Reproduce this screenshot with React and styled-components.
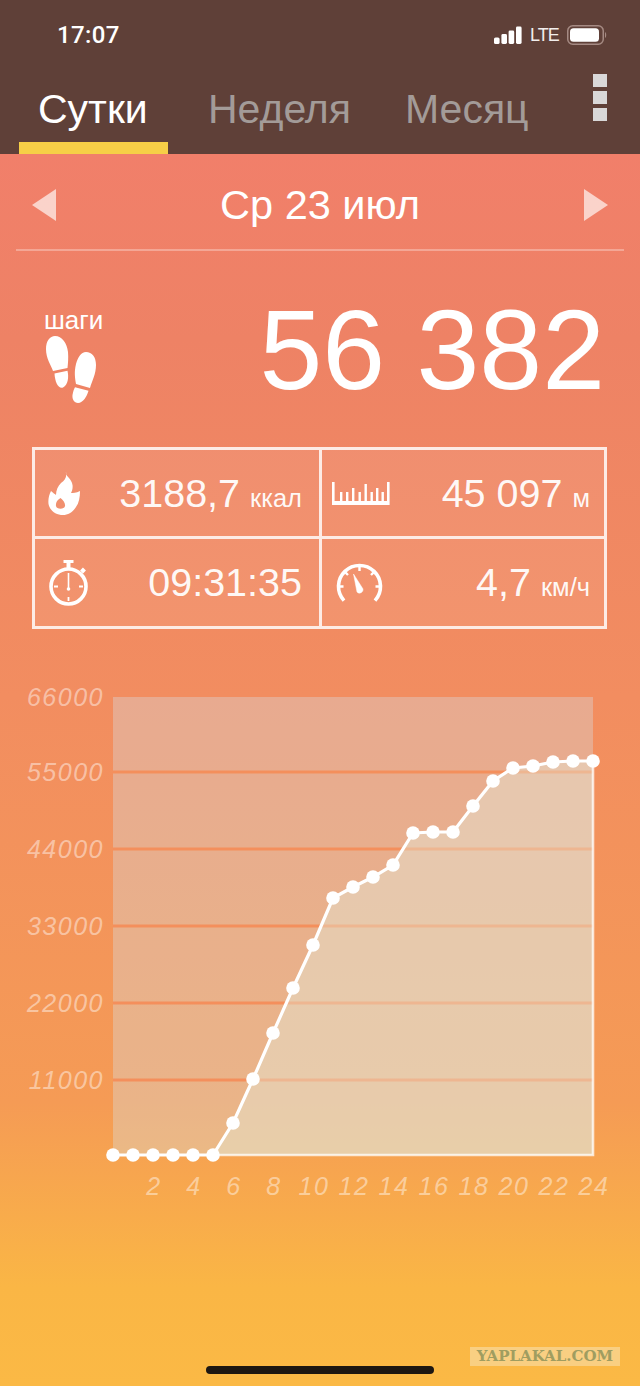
import styled, { createGlobalStyle } from "styled-components";

const GlobalStyle = createGlobalStyle`
  html, body {
    margin: 0;
    padding: 0;
    background: #fbb945;
  }
  * {
    box-sizing: border-box;
  }
`;

const Y_LABELS = [
  { text: "66000", y: 697 },
  { text: "55000", y: 772 },
  { text: "44000", y: 849 },
  { text: "33000", y: 926 },
  { text: "22000", y: 1003 },
  { text: "11000", y: 1080 },
];

const GRID_LINES = [772, 849, 926, 1003, 1080];

const POINT_Y = [
  1155, 1155, 1155, 1155, 1155, 1155, 1123, 1079, 1033, 988, 945, 898, 887, 877,
  865, 833, 832, 832, 806, 781, 768, 766, 762, 761, 761,
];

const pointX = (i) => 113 + i * 20;

function App() {
  const line = POINT_Y.map((y, i) => `${pointX(i)},${y}`).join(" ");
  const hours = [];
  for (let h = 2; h <= 24; h += 2) hours.push(h);

  return (
    <Screen>
      <GlobalStyle />
      <Header>
        <StatusBar>
          <Clock>17:07</Clock>
          <StatusIcons>
            <svg width="28" height="18" viewBox="0 0 28 18" fill="#fff">
              <rect x="0" y="11.5" width="5.6" height="6.5" rx="1.6" />
              <rect x="7.4" y="8" width="5.6" height="10" rx="1.4" />
              <rect x="14.6" y="4.5" width="5.6" height="13.5" rx="1.4" />
              <rect x="22" y="0.5" width="5.6" height="17.5" rx="1.4" />
            </svg>
            <Network>LTE</Network>
            <svg width="40" height="20" viewBox="0 0 40 20">
              <rect x="0.75" y="0.75" width="35.5" height="18.5" rx="5" fill="none" stroke="#a58a83" strokeWidth="1.5" />
              <rect x="3" y="3.2" width="29" height="13.6" rx="3.5" fill="#fff" />
              <path d="M38 7 C39.6 7.6 39.6 12.4 38 13 Z" fill="#a58a83" />
            </svg>
          </StatusIcons>
        </StatusBar>
        <Tabs>
          <Tab $active $width={149}>Сутки</Tab>
          <Tab $width={197}>Неделя</Tab>
          <Tab $width={180}>Месяц</Tab>
          <Menu>
            <MenuDot />
            <MenuDot />
            <MenuDot />
          </Menu>
        </Tabs>
      </Header>

      <Content>
        <DateRow>
          <Arrow $dir="left" />
          <DateText>Ср 23 июл</DateText>
          <Arrow $dir="right" />
        </DateRow>

        <StepsRow>
          <StepsLabel>
            <span>шаги</span>
            <svg width="50" height="70" viewBox="0 0 50 70" fill="#fff">
              <path d="M9 1 C16 1 21 8 22 17 C22.5 23 22 28 21.5 33 L7 36 C5 30 0 24 0 14 C0 6 4 1 9 1 Z" />
              <path d="M8.5 38.5 L21.5 35.7 C23 42 22 50 17 52.5 C12 54 9 47 8.5 38.5 Z" />
              <path d="M40 17 C46 17 50 22 50 30 C50 39 46 46 44 53 L30 49 C29 43 28 37 30 29 C32 22 35 17 40 17 Z" />
              <path d="M29 52.3 L42.5 55.7 C41 61 37 68 32 68 C28 68 26 64 26.5 60 C27 57 28 54 29 52.3 Z" />
            </svg>
          </StepsLabel>
          <StepsValue>56 382</StepsValue>
        </StepsRow>

        <StatsGrid>
          <StatCell>
            <svg width="34" height="44" viewBox="0 0 34 44" fill="#fff">
              <path
                fillRule="evenodd"
                d="M18 1 C17 5 24 8 24.5 14 C25 17 24 20 23 22 C25 22 28 22 32 20 C32 26 31 32 28 36 C25 41 20 44 15 44 C8 44 2 40 0.5 33 C0 28 1 24 3 20 C5 22 7 23 8 24 C8 19 10 15 13 12 C17 9 19 6 18 1 Z M12.5 27 C9 29 7.5 32 8 35 C8.5 38.5 16.5 38.5 17 35 C17.5 32 15 29 12.5 27 Z"
              />
            </svg>
            <StatValue>
              3188,7<Unit>ккал</Unit>
            </StatValue>
          </StatCell>
          <StatCell $right>
            <svg width="58" height="24" viewBox="0 0 58 24" fill="#fff">
              <path d="M0 1 H2.6 V20 H55 V1 H57.6 V24 H0 Z" />
              <rect x="8" y="11" width="2.4" height="10" />
              <rect x="14" y="11" width="2.4" height="10" />
              <rect x="20" y="7" width="2.4" height="14" />
              <rect x="26.5" y="11" width="2.4" height="10" />
              <rect x="32.5" y="3" width="2.4" height="18" />
              <rect x="38.5" y="11" width="2.4" height="10" />
              <rect x="44" y="7" width="2.4" height="14" />
              <rect x="49.5" y="11" width="2.4" height="10" />
            </svg>
            <StatValue>
              45 097<Unit>м</Unit>
            </StatValue>
          </StatCell>
          <StatCell>
            <svg width="41" height="46" viewBox="-1 0 41 46" fill="none" stroke="#fff">
              <circle cx="19.5" cy="26.5" r="17.5" strokeWidth="3.6" />
              <path d="M14.5 1.5 H24.5" strokeWidth="3" />
              <path d="M19.5 1.5 V9" strokeWidth="4" />
              <path d="M32.5 9 L35.5 12" strokeWidth="4" />
              <path d="M19.5 13 V29" strokeWidth="1.6" />
              <circle cx="19.5" cy="29" r="1.8" fill="#fff" stroke="none" />
              <path d="M19.5 37 V41 M5 26.5 H9 M30 26.5 H34" strokeWidth="1.8" />
            </svg>
            <StatValue>09:31:35</StatValue>
          </StatCell>
          <StatCell $right>
            <svg width="53" height="40" viewBox="-3 0 53 40" fill="none" stroke="#fff">
              <path d="M9 37.6 A21 21 0 1 1 40 37.6" strokeWidth="3.6" />
              <path d="M24.5 3 V8 M9.6 8.6 L13 12 M39.4 8.6 L36 12 M3.5 23.5 H8.5 M45.5 23.5 H40.5" strokeWidth="2.4" />
              <path d="M18.5 11 L22 29 A3.5 3.5 0 0 0 28 26 Z" fill="#fff" strokeWidth="0.5" />
            </svg>
            <StatValue>
              4,7<Unit>км/ч</Unit>
            </StatValue>
          </StatCell>
        </StatsGrid>

        <Chart viewBox="0 680 640 530">
          <rect x="113" y="697" width="480" height="458" fill="#d2f0ff" fillOpacity="0.3" />
          {GRID_LINES.map((y) => (
            <line key={y} x1="113" x2="593" y1={y} y2={y} stroke="#f48f5c" strokeWidth="3" />
          ))}
          <polygon points={`${line} 593,1155`} fill="#e4ebdc" fillOpacity="0.42" />
          <polyline points="593,761 593,1155 213,1155" fill="none" stroke="#fff" strokeOpacity="0.75" strokeWidth="2.6" />
          <polyline points={line} fill="none" stroke="#fff" strokeWidth="3.2" />
          {POINT_Y.map((y, i) => (
            <circle key={i} cx={pointX(i)} cy={y} r="6.8" fill="#fff" />
          ))}
          {Y_LABELS.map((l) => (
            <AxisText key={l.text} x="104" y={l.y + 8.5} textAnchor="end">
              {l.text}
            </AxisText>
          ))}
          {hours.map((h) => (
            <AxisText key={h} x={pointX(h) + 1} y="1195" textAnchor="middle">
              {h}
            </AxisText>
          ))}
        </Chart>
      </Content>

      <Watermark>YAPLAKAL.COM</Watermark>
      <HomeBar />
    </Screen>
  );
}

const Screen = styled.div`
  position: relative;
  width: 640px;
  height: 1386px;
  overflow: hidden;
  display: flex;
  flex-direction: column;
  font-family: "Liberation Sans", Arial, sans-serif;
  color: #fff;
`;

const Header = styled.header`
  height: 154px;
  flex: none;
  background: #5f4038;
  display: flex;
  flex-direction: column;
`;

const StatusBar = styled.div`
  height: 70px;
  padding: 0 33px 0 57px;
  display: flex;
  align-items: center;
  justify-content: space-between;
`;

const Clock = styled.span`
  font-family: Roboto, "Liberation Sans", sans-serif;
  font-size: 24px;
  font-weight: 500;
  letter-spacing: 0.4px;
  color: #fff;
`;

const StatusIcons = styled.div`
  display: flex;
  align-items: center;
  gap: 8px;
`;

const Network = styled.span`
  font-size: 18px;
  width: 29px;
  letter-spacing: -0.9px;
  color: #f2eeec;
`;

const Tabs = styled.nav`
  flex: 1;
  display: flex;
  padding-left: 19px;
  align-items: stretch;
`;

const Tab = styled.div`
  width: ${(props) => props.$width}px;
  display: flex;
  align-items: flex-start;
  padding: 15px 0 0 ${(props) => (props.$active ? 19 : 40)}px;
  font-size: 41px;
  line-height: 48px;
  white-space: nowrap;
  color: ${(props) => (props.$active ? "#fff" : "#a39b98")};
  border-bottom: 12px solid ${(props) => (props.$active ? "#f6cf47" : "transparent")};
`;

const Menu = styled.div`
  margin-left: 48px;
  padding-top: 4px;
  display: flex;
  flex-direction: column;
  gap: 4px;
`;

const MenuDot = styled.span`
  width: 14px;
  height: 13px;
  background: #d9d8d8;
`;

const Content = styled.main`
  flex: 1;
  display: flex;
  flex-direction: column;
  background: linear-gradient(
    180deg,
    #f17f6a 0%,
    #ee8265 15%,
    #f28d60 44%,
    #f59b55 77%,
    #fab645 92%,
    #fbb945 100%
  );
`;

const DateRow = styled.div`
  height: 97px;
  flex: none;
  margin: 0 16px;
  padding: 6px 16px 0;
  display: flex;
  align-items: center;
  justify-content: space-between;
  border-bottom: 2px solid rgba(255, 255, 255, 0.3);
`;

const Arrow = styled.span`
  width: 0;
  height: 0;
  border-top: 16px solid transparent;
  border-bottom: 16px solid transparent;
  ${(props) =>
    props.$dir === "left"
      ? "border-right: 24px solid rgba(255, 255, 255, 0.65);"
      : "border-left: 24px solid rgba(255, 255, 255, 0.65);"}
`;

const DateText = styled.span`
  font-size: 41.5px;
  color: #fff;
`;

const StepsRow = styled.section`
  height: 196px;
  flex: none;
  padding: 55px 35px 0 44px;
  display: flex;
  justify-content: space-between;
  align-items: flex-start;
`;

const StepsLabel = styled.div`
  display: flex;
  flex-direction: column;
  font-size: 26px;
  line-height: 29px;
  svg {
    margin-left: 2px;
    display: block;
  }
`;

const StepsValue = styled.div`
  font-size: 113px;
  line-height: 112px;
  margin-top: -12px;
  white-space: nowrap;
`;

const StatsGrid = styled.section`
  width: 575px;
  height: 182px;
  margin-left: 32px;
  flex: none;
  display: grid;
  grid-template-columns: 284px 285px;
  grid-template-rows: 89px 87px;
  border: 3px solid rgba(255, 255, 255, 0.82);
  background: rgba(255, 255, 255, 0.08);
`;

const StatCell = styled.div`
  display: flex;
  align-items: center;
  justify-content: space-between;
  padding: 0 ${(props) => (props.$right ? 14 : 17)}px 0 ${(props) => (props.$right ? 10 : 13)}px;
  border-left: ${(props) => (props.$right ? "3px solid rgba(255, 255, 255, 0.82)" : "none")};
  &:nth-child(-n + 2) {
    border-bottom: 3px solid rgba(255, 255, 255, 0.82);
  }
`;

const StatValue = styled.div`
  font-size: 39.5px;
  white-space: nowrap;
  color: rgba(255, 255, 255, 0.95);
`;

const Unit = styled.span`
  font-size: 25.5px;
  margin-left: 10px;
`;

const Chart = styled.svg`
  width: 640px;
  height: 530px;
  margin-top: 51px;
  display: block;
  flex: none;
`;

const AxisText = styled.text`
  font-size: 25px;
  letter-spacing: 1.5px;
  font-style: italic;
  fill: rgba(255, 255, 255, 0.45);
`;

const Watermark = styled.div`
  position: absolute;
  left: 470px;
  top: 1347px;
  width: 150px;
  height: 19px;
  background: #f9cf82;
  color: #a09d60;
  font-family: "DejaVu Serif", serif;
  font-weight: 700;
  font-size: 15px;
  line-height: 19px;
  text-align: center;
  white-space: nowrap;
`;

const HomeBar = styled.div`
  position: absolute;
  left: 206px;
  top: 1366px;
  width: 228px;
  height: 8px;
  border-radius: 4px;
  background: #1d1712;
`;

export default App;
